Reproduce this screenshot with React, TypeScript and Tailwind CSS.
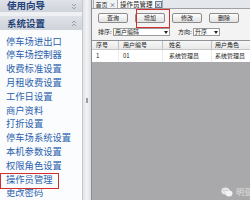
import React from "react";

const items = [
  "停车场进出口",
  "停车场控制器",
  "收费标准设置",
  "月租收费设置",
  "工作日设置",
  "商户资料",
  "打折设置",
  "停车场系统设置",
  "本机参数设置",
  "权限角色设置",
  "操作员管理",
  "更改密码",
];

function Chevrons({ up }: { up?: boolean }) {
  return (
    <svg width="6" height="7" viewBox="0 0 6 7" className={up ? "rotate-180" : ""}>
      <path d="M1 1 L3 3 L5 1 M1 4 L3 6 L5 4" stroke="#9aa0a8" strokeWidth="1" fill="none" />
    </svg>
  );
}

function Btn({ label }: { label: string }) {
  return (
    <div className="w-[30px] h-[10px] flex items-center justify-center rounded-[2px] border border-[#8c8c8c] bg-gradient-to-b from-[#fdfdfd] to-[#e2e2e2] text-[6px] leading-none text-[#222]">
      {label}
    </div>
  );
}

export default function App() {
  const font = { fontFamily: '"Noto Sans CJK SC", "Noto Sans", sans-serif' };
  return (
    <div className="w-[250px] h-[200px] overflow-hidden flex bg-white" style={font}>
      {/* left panel */}
      <div className="w-[83px] h-full flex flex-col bg-[#fbfcfd] border-r border-[#c4c7cc] shrink-0 relative">
        <div className="h-[13px] flex items-center justify-between pl-[7px] pr-[5px] bg-gradient-to-b from-[#dfe2e8] to-[#cfd3da]">
          <span className="text-[9.5px] font-bold text-[#203f78] leading-none">使用向导</span>
          <Chevrons />
        </div>
        <div className="h-[4px] bg-[#eef0f3]" />
        <div className="h-[15px] flex items-center justify-between pl-[7px] pr-[5px] bg-gradient-to-b from-[#dfe2e8] to-[#cfd3da]">
          <span className="text-[9.5px] font-bold text-[#203f78] leading-none">系统设置</span>
          <Chevrons up />
        </div>
        <div className="flex flex-col pt-[4px]">
          {items.map((t) => (
            <div key={t} className="h-[13.8px] flex items-center pl-[6px] text-[9.3px] leading-none text-[#2b63ae] whitespace-nowrap">
              {t}
            </div>
          ))}
        </div>
        <div className="absolute left-0 top-[173px] w-[59px] h-[16px] border-[1.5px] border-[#d2302c]" />
      </div>
      {/* splitter */}
      <div className="w-[9px] h-full shrink-0 bg-gradient-to-r from-[#e2e4e7] via-[#f2f3f5] to-[#dcdee1] border-r border-[#8a8d92] flex items-center justify-center">
        <div className="w-[2px] h-[5px] bg-[#9a9da2] mb-[0px]" />
      </div>
      {/* right */}
      <div className="flex-1 h-full flex flex-col bg-[#a9a9ab] relative">
        <div className="h-[8px] bg-[#e4e7eb] flex items-end pl-[1px] overflow-hidden">
          <div className="h-[8px] w-[25px] bg-[#f2f3f5] border-x border-[#a9acb0] flex items-end justify-center gap-[2px] text-[6px] leading-[7px] text-[#333]">
            <span>首页</span>
            <span>×</span>
          </div>
          <div className="h-[8px] w-[45px] bg-[#fbfbfb] border-r border-[#a9acb0] flex items-end pl-[2px] gap-[2px] text-[6.5px] leading-[7px] text-[#222]">
            <span>操作员管理</span>
            <span className="w-[7px] h-[7px] border border-[#6c7a8c] bg-[#dde6f2] flex items-center justify-center text-[6px] leading-none">×</span>
          </div>
        </div>
        <div className="h-[32px] bg-[#f3f3f3] border-t border-[#9da1a6] flex flex-col pl-[6px]">
          <div className="flex gap-[7px] mt-[4px]">
            <Btn label="查询" />
            <Btn label="增加" />
            <Btn label="修改" />
            <Btn label="删除" />
          </div>
          <div className="flex items-center mt-[5px] text-[6px] leading-none text-[#222]">
            <span className="w-[15px]">排序:</span>
            <div className="w-[57px] h-[8px] bg-white border border-[#9a9a9a] flex items-center justify-between px-[1px]">
              <span>用户编码</span>
              <svg width="4" height="3" viewBox="0 0 4 3"><path d="M0 0 L4 0 L2 3 Z" fill="#222" /></svg>
            </div>
            <span className="ml-[8px] w-[15px]">方向:</span>
            <div className="w-[27px] h-[8px] bg-white border border-[#9a9a9a] flex items-center justify-between px-[1px]">
              <span>升序</span>
              <svg width="4" height="3" viewBox="0 0 4 3"><path d="M0 0 L4 0 L2 3 Z" fill="#222" /></svg>
            </div>
          </div>
        </div>
        <div className="flex flex-col bg-white border-t border-[#8f9398] text-[6px] leading-none text-[#222]">
          <div className="h-[9px] flex bg-gradient-to-b from-[#f7f7f7] to-[#e8e8e8] border-b border-[#c8c8c8]">
            <div className="w-[27px] pl-[4px] flex items-center border-r border-[#c0c0c0]">序号</div>
            <div className="w-[44px] pl-[4px] flex items-center border-r border-[#c0c0c0]">用户编号</div>
            <div className="w-[49px] pl-[6px] flex items-center border-r border-[#c0c0c0]">姓名</div>
            <div className="flex-1 pl-[3px] flex items-center">用户角色</div>
          </div>
          <div className="h-[12px] flex">
            <div className="w-[27px] pl-[4px] flex items-center border-r border-[#ececec]">1</div>
            <div className="w-[44px] pl-[4px] flex items-center border-r border-[#ececec]">01</div>
            <div className="w-[49px] pl-[6px] flex items-center border-r border-[#ececec]">系统管理员</div>
            <div className="flex-1 pl-[3px] flex items-center">系统管理员</div>
          </div>
        </div>
        <div className="absolute left-[44px] top-[9px] w-[34px] h-[19px] border-[1.5px] border-[#d2302c]" />
        <div className="absolute right-0 bottom-[3px] flex items-center gap-[3px] w-[29px] overflow-hidden">
          <svg width="12" height="10" viewBox="0 0 12 10" className="shrink-0">
            <ellipse cx="4.5" cy="4" rx="4.2" ry="3.5" fill="#e6e6e6" />
            <ellipse cx="8" cy="6.5" rx="3.5" ry="3" fill="#f2f2f2" />
            <circle cx="3" cy="3.5" r="0.6" fill="#a9a9ab" />
            <circle cx="6" cy="3.5" r="0.6" fill="#a9a9ab" />
          </svg>
          <span className="text-[8px] leading-none text-[#e2e2e2] whitespace-nowrap">明亚</span>
        </div>
      </div>
    </div>
  );
}
